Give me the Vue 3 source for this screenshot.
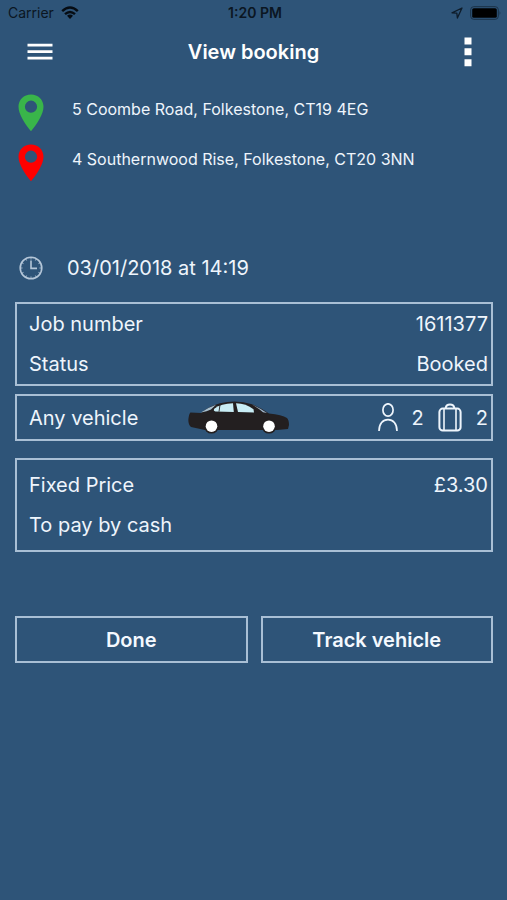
<script setup>
const stops = [
  { kind: 'pickup', address: '5 Coombe Road, Folkestone, CT19 4EG' },
  { kind: 'dropoff', address: '4 Southernwood Rise, Folkestone, CT20 3NN' },
]
</script>

<template>
  <div class="screen">
    <div class="status-bar">
      <div class="carrier">
        <span>Carrier</span>
        <svg width="18" height="14" viewBox="0 0 18 14" aria-hidden="true">
          <g fill="none" stroke="#060c13" stroke-width="2.4">
            <path d="M1.2 5.2Q9 -2 16.8 5.2" />
            <path d="M4 8.2Q9 3.6 14 8.2" />
          </g>
          <path d="M9 13L6 9.8Q9 7.4 12 9.8Z" fill="#060c13" />
        </svg>
      </div>
      <span class="time">1:20 PM</span>
      <div class="indicators">
        <svg width="12" height="12" viewBox="0 0 12 12" aria-hidden="true">
          <path d="M11 1L1 5.8L5.8 6.2L6.4 11Z" fill="none" stroke="#0e1c2a" stroke-width="1.3" stroke-linejoin="round" />
        </svg>
        <svg width="32" height="14" viewBox="0 0 32 14" aria-hidden="true">
          <rect x="0.7" y="0.7" width="27.6" height="12.6" rx="3" fill="none" stroke="#1b3147" stroke-width="1" />
          <rect x="2.2" y="2.2" width="24.6" height="9.6" rx="1.6" fill="#000" />
          <path d="M29.6 4.8Q31.2 7 29.6 9.2Z" fill="#1b3147" />
        </svg>
      </div>
    </div>

    <header class="app-bar">
      <button class="icon-button" type="button" aria-label="Menu">
        <svg width="26" height="18" viewBox="0 0 26 18" aria-hidden="true">
          <path d="M0.5 2.2H25.5M0.5 8.7H25.5M0.5 15.2H25.5" stroke="#fff" stroke-width="2.7" />
        </svg>
      </button>
      <h1>View booking</h1>
      <button class="icon-button more" type="button" aria-label="More options">
        <svg width="8" height="30" viewBox="0 0 8 30" aria-hidden="true">
          <path d="M0.5 0.5h7v7h-7zM0.5 11.3h7v7h-7zM0.5 22.2h7v7h-7z" fill="#fff" />
        </svg>
      </button>
    </header>

    <main>
      <ul class="stops">
        <li v-for="stop in stops" :key="stop.kind">
          <svg :class="['pin', stop.kind]" width="26" height="38" viewBox="0 0 26 38" aria-hidden="true">
            <path fill-rule="evenodd" d="M13 0.5C5.8 0.5 0.5 5.9 0.5 12.6C0.5 20 6.6 29.8 13 37.2C19.4 29.8 25.5 20 25.5 12.6C25.5 5.9 20.2 0.5 13 0.5ZM13 6.6a6.1 6.1 0 1 1 0 12.2a6.1 6.1 0 1 1 0-12.2Z" />
          </svg>
          <span>{{ stop.address }}</span>
        </li>
      </ul>

      <div class="when">
        <svg width="24" height="24" viewBox="0 0 24 24" aria-hidden="true">
          <g fill="none" stroke="#b4c6d8">
            <circle cx="12" cy="12" r="10.8" stroke-width="1.6" />
            <path d="M12 4.5V12.4H18" stroke-width="1.6" />
            <path d="M12 1.5V3.5M12 20.5V22.5M1.5 12H3.5M20.5 12H22.5M6.8 3L7.6 4.5M17.2 3L16.4 4.5M6.8 21L7.6 19.5M17.2 21L16.4 19.5M3 6.8L4.5 7.6M21 6.8L19.5 7.6M3 17.2L4.5 16.4M21 17.2L19.5 16.4" stroke-width="0.9" />
          </g>
        </svg>
        <time datetime="2018-01-03T14:19">03/01/2018 at 14:19</time>
      </div>

      <dl class="panel job">
        <div class="row"><dt>Job number</dt><dd>1611377</dd></div>
        <div class="row"><dt>Status</dt><dd>Booked</dd></div>
      </dl>

      <section class="panel vehicle">
        <span>Any vehicle</span>
        <svg class="car" width="104" height="34" viewBox="0 0 104 34" aria-hidden="true">
          <path d="M14 12Q22 5 33 2.2Q50 -1.4 65 3.2Q73 6.6 82 12.4Q95 13.8 100 17Q102 19 102 24L101 28L90 29H18L4 26Q1 24 1.4 18Q2 13 3.4 11.6Z" fill="#231f20" />
          <path d="M14 11.4Q20 7 29 3.8L24 8.6Q20 10.8 14 11.4Z" fill="#a9c0cf" />
          <path d="M27.5 7.4Q34 2.4 46 2.2L46.8 11L28.4 10.6Q25.8 9.6 27.5 7.4Z" fill="#c8edf5" />
          <path d="M33 3.8L32 10.7" stroke="#231f20" stroke-width="0.9" />
          <path d="M49 2.2Q59 2.4 66.5 8.2L67 11.6L51 11Z" fill="#c8edf5" />
          <path d="M65 3.6Q73 7 80 12L76 11.2Q71 7 65 3.6Z" fill="#9fb5c9" />
          <circle cx="24.5" cy="25.2" r="7.4" fill="#231f20" />
          <circle cx="82" cy="25.2" r="7.4" fill="#231f20" />
          <circle cx="24.5" cy="25.2" r="5.8" fill="#fff" />
          <circle cx="82" cy="25.2" r="5.8" fill="#fff" />
        </svg>
        <div class="capacity">
          <svg width="20" height="30" viewBox="0 0 20 30" role="img" aria-label="Passengers">
            <g fill="none" stroke="#eef5fc" stroke-width="1.7">
              <ellipse cx="10" cy="7" rx="5.1" ry="6.2" />
              <path d="M1 28C1 20.5 5 16.6 10 16.6S19 20.5 19 28" />
            </g>
          </svg>
          <span>2</span>
          <svg width="24" height="30" viewBox="0 0 24 30" role="img" aria-label="Luggage">
            <g fill="none" stroke="#eef5fc" stroke-width="2">
              <rect x="1.4" y="5.6" width="21.2" height="22" rx="3.4" />
              <path d="M6 5.6V27.6M18 5.6V27.6" stroke-width="1.6" />
              <path d="M7.8 5.4V4.4Q8.2 1.4 12 1.4T16.2 4.4V5.4" />
            </g>
          </svg>
          <span>2</span>
        </div>
      </section>

      <section class="panel price">
        <div class="row"><span>Fixed Price</span><span>£3.30</span></div>
        <div class="row"><span>To pay by cash</span></div>
      </section>

      <div class="actions">
        <button type="button">Done</button>
        <button type="button">Track vehicle</button>
      </div>
    </main>
  </div>
</template>

<style>
body {
  margin: 0;
  background: #2e5478;
}
</style>

<style scoped>
.screen {
  min-height: 100vh;
  box-sizing: border-box;
  background: #2e5478;
  color: #eef5fc;
  font-family: Inter, "Liberation Sans", sans-serif;
  font-size: 20px;
  line-height: 24px;
}

.status-bar {
  display: grid;
  grid-template-columns: 1fr auto 1fr;
  align-items: center;
  height: 26px;
  padding: 0 5px 0 8px;
  color: #0b1622;
  font-size: 14px;
  line-height: 16px;
}

.carrier,
.indicators {
  display: flex;
  align-items: center;
  gap: 7px;
}

.indicators {
  justify-content: flex-end;
}

.time {
  font-weight: 600;
}

.app-bar {
  display: grid;
  grid-template-columns: 1fr auto 1fr;
  align-items: center;
  height: 52px;
  padding: 0 27px;
}

.app-bar h1 {
  margin: 0;
  color: #fff;
  font-size: 20px;
  font-weight: 600;
  line-height: 24px;
}

.icon-button {
  display: flex;
  justify-self: start;
  padding: 0;
  border: 0;
  background: none;
  cursor: pointer;
}

.icon-button.more {
  justify-self: end;
  padding: 0 8px;
}

main {
  padding: 10px 14px 32px 15px;
}

.stops {
  margin: 0;
  padding: 0;
  list-style: none;
  font-size: 16px;
}

.stops li {
  display: flex;
  align-items: center;
  gap: 28px;
  height: 50px;
  padding-left: 3px;
}

.stops span {
  padding-bottom: 8px;
}

.pin {
  flex: none;
}

.pin.pickup {
  fill: #39b54a;
}

.pin.dropoff {
  fill: #f00;
}

.when {
  display: flex;
  align-items: center;
  gap: 24px;
  margin-top: 68px;
  padding-left: 4px;
}

.panel {
  box-sizing: border-box;
  margin: 0;
  border: 2px solid #a9bfd5;
  padding: 0 3px 0 12px;
}

.row {
  display: flex;
  align-items: center;
  justify-content: space-between;
  height: 40px;
}

.row dd {
  margin: 0;
}

.job {
  margin-top: 22px;
}

.vehicle {
  display: grid;
  grid-template-columns: 4fr auto 5fr;
  align-items: center;
  height: 47px;
  margin-top: 8px;
}

.capacity {
  display: flex;
  align-items: center;
  justify-content: flex-end;
  gap: 14px;
}

.price {
  margin-top: 17px;
  padding-top: 5px;
  padding-bottom: 5px;
}

.actions {
  display: grid;
  grid-template-columns: 1fr 1fr;
  gap: 13px;
  margin-top: 64px;
}

.actions button {
  height: 47px;
  border: 2px solid #a9bfd5;
  padding: 0;
  background: none;
  color: #f4f9ff;
  font: inherit;
  font-weight: 600;
  cursor: pointer;
}
</style>
